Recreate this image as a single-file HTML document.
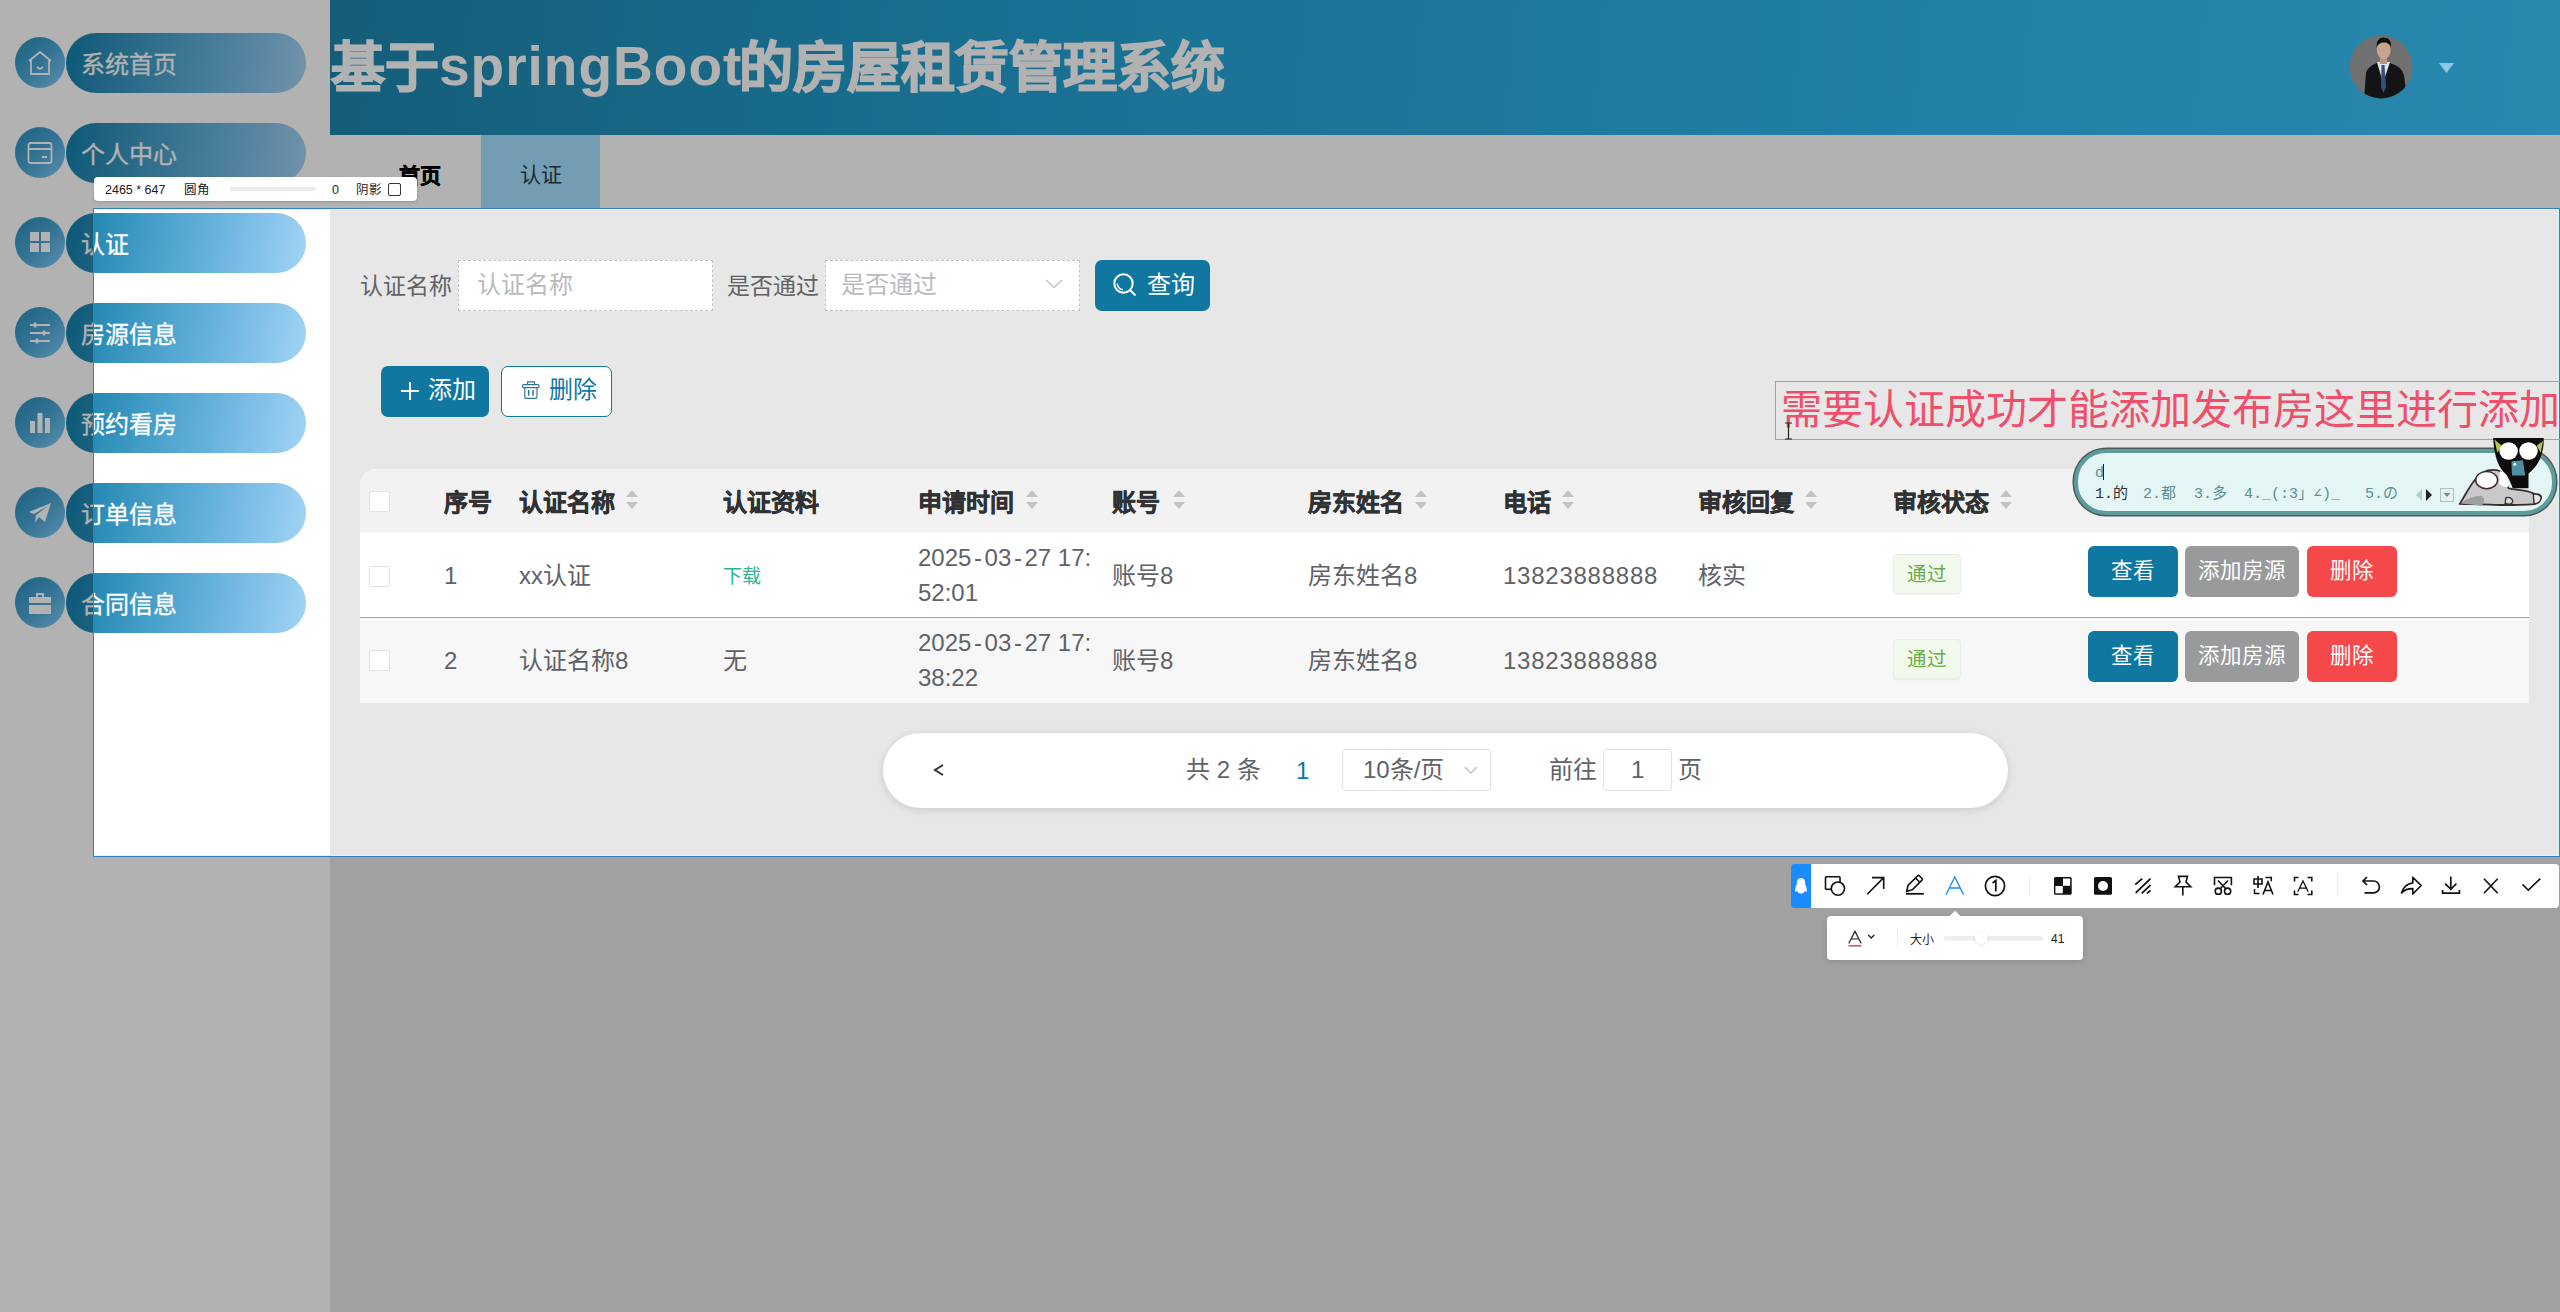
<!DOCTYPE html>
<html lang="zh-CN">
<head>
<meta charset="utf-8">
<style>
*{margin:0;padding:0;box-sizing:border-box;}
html,body{width:2560px;height:1312px;overflow:hidden;}
body{position:relative;background:#e7e7e7;font-family:"Liberation Sans",sans-serif;color:#606266;}
.abs{position:absolute;}
#side{left:0;top:0;width:330px;height:1312px;background:#fff;}
.mi{position:absolute;left:0;width:330px;height:62px;}
.mi .cir{position:absolute;left:15px;top:4px;width:50px;height:51px;border-radius:50%;
  background:linear-gradient(135deg,#2a8dbb 0%,#4aa5d3 50%,#86cdfb 100%);}
.mi .pill{position:absolute;left:66px;top:0;width:240px;height:60px;border-radius:30px;
  background:linear-gradient(100deg,#0f80ad 0%,#2a8cb6 15%,#4ba2cc 40%,#66b2dc 60%,#84c2ea 80%,#a2d4f4 100%);}
.mi .txt{position:absolute;left:81px;top:2px;height:60px;line-height:60px;font-size:24px;color:#fff;-webkit-text-stroke:0.3px #fff;}
.mi svg{position:absolute;left:27px;top:17px;}
#hdr{left:330px;top:0;width:2230px;height:135px;
  background:linear-gradient(96deg,#1e86ae 0%,#24a0d0 30%,#2db0e5 58%,#3bc4fb 100%);}
#title{left:331px;top:28px;font-size:55px;font-weight:bold;color:#fff;white-space:nowrap;line-height:76px;}
#title .c{-webkit-text-stroke:1.5px #fff;font-size:54px;position:relative;top:2px;}
#title .l{letter-spacing:1px;}
#title .c2{margin-left:-3px;}
#tabs{left:330px;top:135px;width:2230px;height:73px;background:#fff;}

.t24{font-size:24px;line-height:30px;white-space:nowrap;position:absolute;}
.lbl{color:#606266;font-size:23px !important;}
.inp{position:absolute;top:260px;height:51px;background:#fff;border:1px dashed #c4c4c4;}
.ph{color:#b9babe;}
.btn{position:absolute;border-radius:7px;color:#fff;font-size:24px;line-height:50px;height:51px;text-align:center;white-space:nowrap;}
.tabtxt{position:absolute;top:158px;font-size:21px;line-height:27px;white-space:nowrap;}

#tbl{left:360px;top:469px;width:2169px;height:234px;background:#fff;border-top-left-radius:16px;overflow:hidden;}
#thead{position:absolute;left:0;top:0;width:2169px;height:64px;background:#f2f2f2;}
#row2{position:absolute;left:0;top:148px;width:2169px;height:86px;background:#f7f7f7;border-top:1px solid #a0a0a0;}
.th{position:absolute;font-size:24px;line-height:30px;font-weight:bold;color:#303133;white-space:nowrap;-webkit-text-stroke:0.5px #303133;}
.td{position:absolute;font-size:24px;line-height:35px;color:#606266;white-space:nowrap;}
.hy{margin:0 2.6px;}
.cb{position:absolute;left:9px;width:21px;height:21px;background:#fff;border:1px solid #e3e3e5;border-radius:2px;}
.sort{position:absolute;width:14px;height:22px;}
.tag{position:absolute;left:1533px;width:68px;height:40px;background:#f1f8ec;border:1px solid #e9efe6;border-radius:4px;color:#6aae48;font-size:19.5px;line-height:39px;text-align:center;box-shadow:0 1px 2px rgba(0,0,0,0.06);}
.ab{position:absolute;height:51px;border-radius:6px;color:#fff;font-size:21.5px;line-height:51px;text-align:center;white-space:nowrap;}

#pager{left:883px;top:733px;width:1125px;height:75px;background:#fff;border-radius:38px;box-shadow:0 2px 8px rgba(0,0,0,0.12);}
.pg{position:absolute;font-size:24px;line-height:30px;white-space:nowrap;color:#606266;}
#sel{left:93px;top:208px;width:2467px;height:649px;border:1px solid #3580c0;box-shadow:0 0 0 3000px rgba(0,0,0,0.3);}
#selin{left:94px;top:209px;width:2465px;height:647px;border:1px solid rgba(205,252,255,0.85);border-left:0;}

#panel{left:94px;top:177px;width:323px;height:24px;background:#fff;border-radius:4px;box-shadow:0 1px 3px rgba(0,0,0,0.15);}
.sm{position:absolute;font-size:12.5px;line-height:14px;white-space:nowrap;color:#222;}
#anno{left:1775px;top:381px;width:800px;height:59px;border:1px solid #ec8097;}
#annotxt{left:1781px;top:383px;font-size:41px;line-height:54px;color:#ef4f6b;white-space:nowrap;}
#ime{left:2074px;top:449px;width:482px;height:66px;border-radius:32px;background:#e3f5f5;border:4px solid #5e9b9d;box-shadow:0 0 0 1.5px #4a5a5a;}
.ime{position:absolute;font-family:"Liberation Mono",monospace;font-size:15px;line-height:18px;white-space:nowrap;color:#5b8f91;}
#tb{left:1791px;top:864px;width:768px;height:44px;background:#fff;border-radius:4px;}
#sub{left:1827px;top:916px;width:256px;height:44px;background:#fff;border-radius:4px;box-shadow:0 2px 6px rgba(0,0,0,0.12);}
</style>
</head>
<body>
<div id="side" class="abs">
  <div class="mi" style="top:33px"><div class="cir"></div><div class="pill"></div><div class="txt">系统首页</div>
    <svg width="26" height="26" viewBox="0 0 26 26" fill="none" stroke="#fff" stroke-width="1.8"><path d="M2 11 L13 2 L24 11 M4 9.5 V24 H22 V9.5"/><path d="M10 17 l3 2 l3 -2" stroke-width="1.6"/></svg></div>
  <div class="mi" style="top:123px"><div class="cir"></div><div class="pill"></div><div class="txt">个人中心</div>
    <svg width="26" height="26" viewBox="0 0 26 26" fill="none" stroke="#fff" stroke-width="1.8"><rect x="1.5" y="3" width="23" height="20" rx="2"/><path d="M1.5 9 H24.5 M15 17 H20" /></svg></div>
  <div class="mi" style="top:213px"><div class="cir"></div><div class="pill"></div><div class="txt">认证</div>
    <svg width="26" height="26" viewBox="0 0 26 26" fill="#fff"><rect x="3" y="2" width="9" height="9"/><rect x="14" y="2" width="9" height="9"/><rect x="3" y="13" width="9" height="9"/><rect x="14" y="13" width="9" height="9"/></svg></div>
  <div class="mi" style="top:303px"><div class="cir"></div><div class="pill"></div><div class="txt">房源信息</div>
    <svg width="26" height="26" viewBox="0 0 26 26" fill="none" stroke="#fff" stroke-width="2"><path d="M3 5 H23 M3 13 H23 M3 21 H23"/><path d="M8 2.5 V7.5 M17 10.5 V15.5 M10 18.5 V23.5" stroke-width="2.6"/></svg></div>
  <div class="mi" style="top:393px"><div class="cir"></div><div class="pill"></div><div class="txt">预约看房</div>
    <svg width="26" height="26" viewBox="0 0 26 26" fill="#fff"><rect x="3" y="11" width="5" height="12"/><rect x="10.5" y="3" width="5" height="20"/><rect x="18" y="8" width="5" height="15"/></svg></div>
  <div class="mi" style="top:483px"><div class="cir"></div><div class="pill"></div><div class="txt">订单信息</div>
    <svg width="26" height="26" viewBox="0 0 26 26" fill="#fff"><path d="M2 12 L24 3 L18 22 L12 17 L8 23 L9 15 L21 6 L7 14 Z"/></svg></div>
  <div class="mi" style="top:573px"><div class="cir"></div><div class="pill"></div><div class="txt">合同信息</div>
    <svg width="26" height="26" viewBox="0 0 26 26" fill="#fff"><path d="M9 3 H17 V7 H24 V13 H2 V7 H9 Z M11 5 V7 H15 V5 Z"/><rect x="2" y="15" width="22" height="9"/></svg></div>
</div>
<div id="hdr" class="abs"></div>
<div id="title" class="abs"><span class="c">基于</span><span class="l">springBoot</span><span class="c c2">的房屋租赁管理系统</span></div>
<div id="tabs" class="abs"></div>

<div class="tabtxt" style="left:399px;top:162px;color:#000;font-weight:bold;-webkit-text-stroke:0.5px #000;">首页</div>
<div class="abs" style="left:481px;top:135px;width:119px;height:73px;background:#a5e1ff;"></div>
<div class="tabtxt" style="left:520px;top:161px;color:#2b3d48;">认证</div>

<div class="t24 lbl" style="left:360px;top:271px;">认证名称</div>
<div class="inp" style="left:458px;width:255px;"></div>
<div class="t24 ph" style="left:477px;top:270px;">认证名称</div>
<div class="t24 lbl" style="left:727px;top:271px;">是否通过</div>
<div class="inp" style="left:825px;width:255px;"></div>
<div class="t24 ph" style="left:841px;top:270px;">是否通过</div>
<svg class="abs" style="left:1045px;top:279px" width="18" height="10" viewBox="0 0 18 10" fill="none" stroke="#c0c4cc" stroke-width="1.6"><path d="M1 1 L9 8.5 L17 1"/></svg>
<div class="btn" style="left:1095px;top:260px;width:115px;background:#0f77a0;"></div>
<svg class="abs" style="left:1112px;top:272px" width="26" height="26" viewBox="0 0 26 26" fill="none" stroke="#fff" stroke-width="2"><circle cx="11.5" cy="11.5" r="9.2"/><path d="M18 18 L23.5 23.5"/><path d="M5.3 11.5 A6.2 6.2 0 0 0 11 17.7" stroke-width="1.5"/></svg>
<div class="t24" style="left:1147px;top:270px;color:#fff;">查询</div>

<div class="btn" style="left:381px;top:366px;width:108px;background:#0f77a0;"></div>
<svg class="abs" style="left:399px;top:380px" width="22" height="22" viewBox="0 0 22 22" fill="none" stroke="#fff" stroke-width="2"><path d="M11 2 V20 M2 11 H20"/></svg>
<div class="t24" style="left:428px;top:375px;color:#fff;">添加</div>
<div class="btn" style="left:501px;top:366px;width:111px;background:#fff;border:1px solid #0f77a0;"></div>
<svg class="abs" style="left:520px;top:379px" width="22" height="22" viewBox="520 379 22 22" fill="none" stroke="#2f7490" stroke-width="1.15" stroke-linejoin="round"><path d="M527.5 384.5 V381.8 H534.5 V384.5"/><rect x="522.5" y="384.6" width="16.6" height="3" rx="1.2"/><path d="M524.8 387.8 V397 Q524.8 398.3 526.2 398.3 H535.6 Q537 398.3 537 397 V387.8"/><path d="M528.7 390 V395.8 M533 390 V395.8" stroke-width="1.5"/></svg>
<div class="t24" style="left:549px;top:375px;color:#0f77a0;">删除</div>

<div id="tbl" class="abs">
 <div id="thead"></div>
 <div id="row2"></div>
 <div class="cb" style="top:22px"></div>
 <div class="cb" style="top:97px"></div>
 <div class="cb" style="top:181px"></div>
 <div class="th" style="left:84px;top:19px">序号</div>
 <div class="th" style="left:159px;top:19px">认证名称</div>
 <div class="th" style="left:363px;top:19px">认证资料</div>
 <div class="th" style="left:558px;top:19px">申请时间</div>
 <div class="th" style="left:752px;top:19px">账号</div>
 <div class="th" style="left:948px;top:19px">房东姓名</div>
 <div class="th" style="left:1143px;top:19px">电话</div>
 <div class="th" style="left:1338px;top:19px">审核回复</div>
 <div class="th" style="left:1533px;top:19px">审核状态</div>
<svg class="sort" style="left:265px;top:20px" viewBox="0 0 14 22" fill="#c3c3c5"><path d="M7 1 L13 8 H1 Z M1 13 H13 L7 20 Z"/></svg><svg class="sort" style="left:665px;top:20px" viewBox="0 0 14 22" fill="#c3c3c5"><path d="M7 1 L13 8 H1 Z M1 13 H13 L7 20 Z"/></svg><svg class="sort" style="left:812px;top:20px" viewBox="0 0 14 22" fill="#c3c3c5"><path d="M7 1 L13 8 H1 Z M1 13 H13 L7 20 Z"/></svg><svg class="sort" style="left:1054px;top:20px" viewBox="0 0 14 22" fill="#c3c3c5"><path d="M7 1 L13 8 H1 Z M1 13 H13 L7 20 Z"/></svg><svg class="sort" style="left:1201px;top:20px" viewBox="0 0 14 22" fill="#c3c3c5"><path d="M7 1 L13 8 H1 Z M1 13 H13 L7 20 Z"/></svg><svg class="sort" style="left:1444px;top:20px" viewBox="0 0 14 22" fill="#c3c3c5"><path d="M7 1 L13 8 H1 Z M1 13 H13 L7 20 Z"/></svg><svg class="sort" style="left:1639px;top:20px" viewBox="0 0 14 22" fill="#c3c3c5"><path d="M7 1 L13 8 H1 Z M1 13 H13 L7 20 Z"/></svg>
 <div class="td" style="left:84px;top:89px">1</div>
 <div class="td" style="left:159px;top:89px">xx认证</div>
 <div class="td" style="left:363px;top:90px;font-size:19px;color:#2fb593;">下载</div>
 <div class="td" style="left:558px;top:71px;line-height:35px;">2025<span class="hy">-</span>03<span class="hy">-</span>27 17:<br>52:01</div>
 <div class="td" style="left:752px;top:89px">账号8</div>
 <div class="td" style="left:948px;top:89px">房东姓名8</div>
 <div class="td" style="left:1143px;top:89px;letter-spacing:0.75px">13823888888</div>
 <div class="td" style="left:1338px;top:89px">核实</div>
 <div class="tag" style="top:85px">通过</div>
 <div class="ab" style="left:1728px;top:77px;width:90px;background:#0f77a0;">查看</div>
 <div class="ab" style="left:1825px;top:77px;width:114px;background:#999a9b;">添加房源</div>
 <div class="ab" style="left:1947px;top:77px;width:90px;background:#f5484b;">删除</div>

 <div class="td" style="left:84px;top:174px">2</div>
 <div class="td" style="left:159px;top:174px">认证名称8</div>
 <div class="td" style="left:363px;top:174px">无</div>
 <div class="td" style="left:558px;top:156px;line-height:35px;">2025<span class="hy">-</span>03<span class="hy">-</span>27 17:<br>38:22</div>
 <div class="td" style="left:752px;top:174px">账号8</div>
 <div class="td" style="left:948px;top:174px">房东姓名8</div>
 <div class="td" style="left:1143px;top:174px;letter-spacing:0.75px">13823888888</div>
 <div class="tag" style="top:170px">通过</div>
 <div class="ab" style="left:1728px;top:162px;width:90px;background:#0f77a0;">查看</div>
 <div class="ab" style="left:1825px;top:162px;width:114px;background:#999a9b;">添加房源</div>
 <div class="ab" style="left:1947px;top:162px;width:90px;background:#f5484b;">删除</div>
</div>

<div id="pager" class="abs"></div>
<svg class="abs" style="left:933px;top:763px" width="12" height="14" viewBox="0 0 12 14" fill="none" stroke="#303133" stroke-width="2"><path d="M10 2 L2 7 L10 12"/></svg>
<div class="pg" style="left:1186px;top:755px;">共 2 条</div>
<div class="pg" style="left:1296px;top:756px;color:#0f77a0;">1</div>
<div class="abs" style="left:1342px;top:749px;width:149px;height:42px;border:1px solid #e2e2e4;border-radius:3px;background:#fff;"></div>
<div class="pg" style="left:1363px;top:755px;">10条/页</div>
<svg class="abs" style="left:1464px;top:766px" width="14" height="8" viewBox="0 0 14 8" fill="none" stroke="#c0c4cc" stroke-width="1.5"><path d="M1 1 L7 7 L13 1"/></svg>
<div class="pg" style="left:1549px;top:755px;">前往</div>
<div class="abs" style="left:1603px;top:749px;width:69px;height:42px;border:1px solid #e2e2e4;border-radius:3px;background:#fff;"></div>
<div class="pg" style="left:1631px;top:755px;">1</div>
<div class="pg" style="left:1678px;top:755px;">页</div>

<div id="sel" class="abs"></div>
<div id="selin" class="abs"></div>

<svg class="abs" style="left:2349px;top:35px" width="64" height="64" viewBox="0 0 64 64">
 <defs><clipPath id="av"><circle cx="32" cy="32" r="31.5"/></clipPath></defs>
 <g clip-path="url(#av)">
  <rect width="64" height="64" fill="#707071"/>
  <path d="M15 64 L17 38 Q19 31 28 28 L41 28 Q52 31 55 40 L58 64 Z" fill="#141416"/>
  <path d="M28 27 L34 48 L41 27 Z" fill="#e2e2e6"/>
  <path d="M32.5 30 L35.5 30 L37 52 L34.5 58 L32 52 Z" fill="#34507e"/>
  <rect x="31" y="21" width="7" height="8" fill="#b89580"/>
  <ellipse cx="34.7" cy="15" rx="7" ry="9" fill="#c9a48c"/>
  <path d="M27.5 13 Q27 2 35 2.5 Q43 2.5 42 13 Q41 7.5 35 7.5 Q29 7.5 27.5 13 Z" fill="#0e0e0e"/>
 </g>
</svg>
<svg class="abs" style="left:2438px;top:62px" width="17" height="12" viewBox="0 0 17 12"><path d="M1 1 H16 L8.5 11 Z" fill="#8ccbe6"/></svg>

<div id="panel" class="abs"></div>
<div class="sm" style="left:105px;top:183px;">2465 * 647</div>
<div class="sm" style="left:184px;top:183px;">圆角</div>
<div class="abs" style="left:223px;top:187px;width:93px;height:4px;border-radius:2px;background:#ececec;"></div>
<div class="abs" style="left:215px;top:181px;width:16px;height:16px;border-radius:50%;background:#fff;box-shadow:0 0 3px rgba(0,0,0,0.08);"></div>
<div class="sm" style="left:332px;top:183px;">0</div>
<div class="sm" style="left:356px;top:183px;">阴影</div>
<div class="abs" style="left:388px;top:183px;width:13px;height:13px;border:1px solid #333;border-radius:2px;background:#fff;"></div>

<div id="anno" class="abs"></div>
<div id="annotxt" class="abs">需要认证成功才能添加发布房这里进行添加</div>
<svg class="abs" style="left:1784px;top:422px" width="9" height="18" viewBox="0 0 9 18" fill="none" stroke="#222" stroke-width="1.2"><path d="M1 1 H8 M4.5 1 V17 M1 17 H8"/></svg>

<div id="ime" class="abs"></div>
<div class="ime" style="left:2095px;top:465px;">d</div>
<div class="abs" style="left:2103px;top:464px;width:1px;height:16px;background:#222;"></div>
<div class="ime" style="left:2095px;top:486px;color:#333;">1.的</div>
<div class="ime" style="left:2143px;top:486px;">2.都</div>
<div class="ime" style="left:2194px;top:486px;">3.多</div>
<div class="ime" style="left:2244px;top:486px;">4._(:3」∠)_</div>
<div class="ime" style="left:2365px;top:486px;">5.の</div>
<svg class="abs" style="left:2414px;top:487px" width="42" height="16" viewBox="0 0 42 16"><path d="M8 2 L2 8 L8 14 Z" fill="#b0cfcf"/><path d="M12 2 L18 8 L12 14 Z" fill="#222"/><rect x="26.5" y="1.5" width="13" height="13" fill="#e8f0f0" stroke="#a9c4c4"/><path d="M29.5 6 H36.5 L33 10 Z" fill="#6f8f8f"/></svg>
<svg class="abs" style="left:2440px;top:430px" width="120" height="90" viewBox="0 0 1749 1312">
 <path d="M290,1075 C400,900 500,650 700,590 C800,570 870,590 900,620 L1000,850 C1100,870 1250,880 1300,900 C1360,920 1380,940 1400,935 C1470,930 1490,980 1460,1010 C1440,1040 1420,1070 1380,1080 C1200,1090 1000,1100 800,1090 C600,1080 400,1080 290,1075 Z" fill="#c9c9cb" stroke="#3a2c2c" stroke-width="26"/>
 <path d="M300,1070 C400,1000 500,960 600,960 L640,990 C650,1050 620,1100 600,1100 C500,1090 400,1080 300,1070 Z" fill="#9d9fa0"/>
 <ellipse cx="680" cy="730" rx="160" ry="125" fill="#fff" stroke="#3a2c2c" stroke-width="22"/>
 <path d="M775,115 L1510,115 C1520,250 1480,420 1400,520 C1350,590 1300,620 1290,640 L1290,850 L1060,850 C1030,760 1000,700 960,640 C860,560 790,400 775,115 Z" fill="#0d0b0b"/>
 <path d="M870,600 C950,600 1010,700 995,830 C950,840 900,820 860,780 Z" fill="#fff"/>
 <path d="M795,140 L900,230 L835,330 Z" fill="#b9c44a"/>
 <path d="M1500,160 L1410,230 L1470,330 Z" fill="#b9c44a"/>
 <ellipse cx="1000" cy="305" rx="135" ry="128" fill="#fff"/>
 <ellipse cx="1290" cy="305" rx="135" ry="128" fill="#fff"/>
 <path d="M1040,455 L1210,440 L1240,665 L1050,665 Z" fill="#4d8f9e"/>
 <circle cx="1090" cy="500" r="22" fill="#eee"/>
 <path d="M1360,940 C1420,920 1490,960 1470,1010 C1450,1060 1420,1080 1370,1075 Z" fill="#e8e8e8" stroke="#3a2c2c" stroke-width="20"/>
 <path d="M960,990 C1000,970 1060,990 1060,1040 C1050,1090 1000,1090 950,1070 Z" fill="#dcdcdc" stroke="#3a2c2c" stroke-width="20"/>
</svg>

<div id="tb" class="abs"></div>
<div class="abs" style="left:1791px;top:864px;width:20px;height:44px;background:#1a8cff;border-radius:3px 0 0 3px;"></div>

<svg class="abs" style="left:1791px;top:864px" width="770" height="100" viewBox="1791 864 770 100" fill="none" stroke="#111" stroke-width="1.6" stroke-linecap="butt" stroke-linejoin="miter">
 <g fill="#fff" stroke="none"><ellipse cx="1801" cy="883" rx="4.3" ry="5"/><path d="M1796.2 885 Q1795 889 1795.2 892 L1797 891 Q1798 893.5 1801 893.5 Q1804 893.5 1805 891 L1806.8 892 Q1807 889 1805.8 885 Z"/></g>
 <path d="M1825.5 889.3 V877.5 Q1825.5 876.8 1826.2 876.8 H1839.3 Q1840 876.8 1840 877.5 V882"/><path d="M1831 889.3 H1825.5"/><circle cx="1837.9" cy="888.6" r="6.6" fill="#fff"/>
 <path d="M1867.2 894.2 L1883.7 877.6 M1872 877.6 H1883.7 V889"/>
 <path d="M1906.7 891.3 L1908 885.5 L1917.7 875.8 Q1918.5 875 1919.3 875.8 L1922 878.5 Q1922.8 879.3 1922 880.1 L1912.3 889.8 Z M1915.5 878 L1919.8 882.3"/><path d="M1906 893.8 H1923.8" stroke-width="1.8"/>
 <path d="M1946 894.7 L1954.8 877 L1963.6 894.7 M1949.3 888 H1960.3" stroke="#1e8cf0" stroke-width="1.4"/>
 <circle cx="1995" cy="886" r="9.6" stroke-width="1.7"/><path d="M1992.6 883 L1995.8 880.5 V891.5" stroke-width="1.8"/>
 <path d="M2029.5 877 V896" stroke="#ececec" stroke-width="1"/>
 <rect x="2054" y="877" width="17.7" height="17.8" rx="1.6" fill="#111" stroke="none"/>
 <rect x="2063" y="878.5" width="7.2" height="7.3" fill="#fff" stroke="none"/><rect x="2055.4" y="886" width="7.4" height="7.3" fill="#fff" stroke="none"/>
 <rect x="2094" y="877" width="18" height="17.8" rx="1.6" fill="#111" stroke="none"/><circle cx="2103" cy="886" r="5" fill="#fff" stroke="none"/>
 <path d="M2135.2 884.6 L2142.3 878.6 M2135.7 892.8 L2150.5 878.6 M2141.7 893.4 L2150.5 885.2 M2147 893.4 L2150.5 890.3" stroke-width="1.8"/>
 <path d="M2178.5 876.4 H2187.5 L2186 882 L2190.8 886.8 H2175.2 L2180 882 Z M2182.8 886.8 V895.5"/>
 <path d="M2214.5 885.2 V877.5 H2231.4 V885.2"/><circle cx="2218.3" cy="891.2" r="3.1"/><circle cx="2227.6" cy="891.2" r="3.1"/><path d="M2218 880.5 L2226 889 M2228 880.5 L2220 889"/>
 <path d="M2254 879 H2262 V884 H2254 Z M2258 876 V888" stroke-width="1.6"/>
 <path d="M2265.5 877.5 H2271.3 V881.3 M2254.5 889 V893.5 H2259.5" stroke-width="1.5"/>
 <path d="M2263 894.5 L2268 882 L2273 894.5 M2264.6 890.5 H2271.4" stroke-width="1.6"/>
 <path d="M2294.5 881.5 V877.5 H2298.5 M2307.5 877.5 H2311.8 V881.5 M2294.5 890.5 V894.5 H2298.5 M2307.5 894.5 H2311.8 V890.5" stroke-width="1.6"/>
 <path d="M2297.8 891.7 L2303 881 L2308.2 891.7 M2299.5 888.2 H2306.5" stroke-width="1.3"/>
 <path d="M2337.5 872 V895.6" stroke="#ececec" stroke-width="1"/>
 <path d="M2367 877 L2363 881 L2367 885 M2363 881 H2373.5 A5.9 5.9 0 0 1 2373.5 892.8 H2364.5" stroke-width="1.7"/>
 <path d="M2401.6 892.8 Q2404 884 2412.8 882.8 V877.3 L2421.2 885.5 L2412.8 894 V888.7 Q2406 888.5 2401.6 892.8 Z" stroke-width="1.7" stroke-linejoin="round"/>
 <path d="M2450.8 876.4 V889 M2445.2 883.6 L2450.8 889.3 L2456.4 883.6 M2442.6 890 V893.2 H2459.4 V890" stroke-width="1.7"/>
 <path d="M2484 878.7 L2497.7 893.3 M2497.7 878.7 L2484 893.3" stroke-width="1.6"/>
 <path d="M2522.5 884.4 L2528.3 890.2 L2540.3 878.7" stroke-width="1.6"/>
</svg>
<svg class="abs" style="left:1948px;top:910px" width="14" height="7" viewBox="0 0 14 7"><path d="M1 6.5 L7 0.8 L13 6.5 Z" fill="#fff"/></svg>
<div id="sub" class="abs"></div>
<svg class="abs" style="left:1827px;top:916px" width="256" height="44" viewBox="1827 916 256 44" fill="none" stroke="#222" stroke-width="1.2" stroke-linecap="round">
 <path d="M1849 943 L1855 931.4 L1861 943 M1851.2 939 H1858.8"/>
 <path d="M1848.5 945.8 H1861.5" stroke="#d4587a" stroke-width="1.7" stroke-linecap="butt"/>
 <path d="M1868.5 935.2 L1871.2 938 L1874 935.2" stroke-width="1.3"/>
 <path d="M1897.5 929 V947" stroke="#eeeeee" stroke-width="1"/>
 <path d="M1946 938.2 H2041" stroke="#eeeeee" stroke-width="4.5"/>
</svg>
<div class="sm" style="left:1910px;top:933px;font-size:12px;">大小</div>
<div class="abs" style="left:1974.5px;top:931px;width:13px;height:13px;border-radius:50%;background:#fff;box-shadow:0 1px 3px rgba(0,0,0,0.10);"></div>
<div class="sm" style="left:2051px;top:932px;font-size:12px;">41</div>
</body>
</html>
